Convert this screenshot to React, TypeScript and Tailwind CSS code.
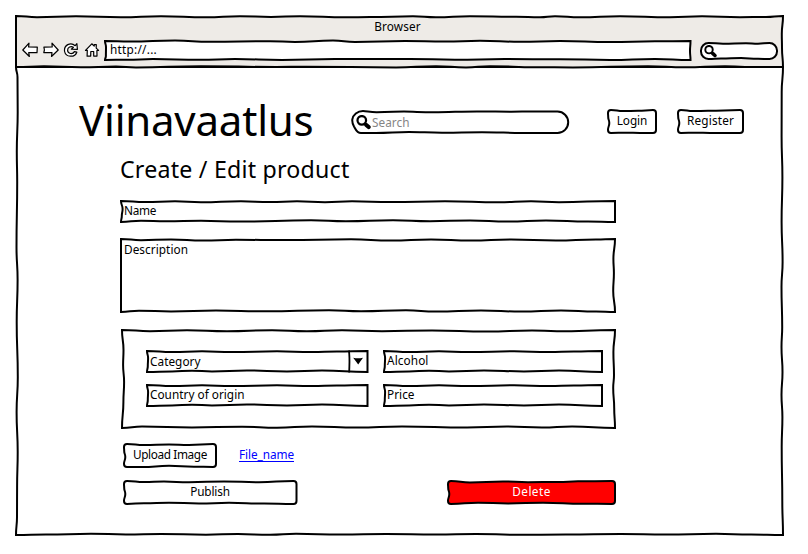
import { useLayoutEffect, useRef, useState, type ReactNode } from "react";

type Stop = [at: number, inset: number];
type Pt = [number, number];

interface Edges {
  top?: Stop[];
  right?: Stop[];
  bottom?: Stop[];
  left?: Stop[];
}

const f = (n: number) => n.toFixed(2);

// Smooth curve through every point of one edge.
function curve(p: Pt[]): string {
  let d = "";
  for (let i = 0; i < p.length - 1; i++) {
    const a = p[i];
    const b = p[i + 1];
    const horizontal = Math.abs(b[0] - a[0]) > Math.abs(b[1] - a[1]);
    const mx = (a[0] + b[0]) / 2;
    const my = (a[1] + b[1]) / 2;
    d += horizontal
      ? `C${f(mx)} ${f(a[1])} ${f(mx)} ${f(b[1])} ${f(b[0])} ${f(b[1])}`
      : `C${f(a[0])} ${f(my)} ${f(b[0])} ${f(my)} ${f(b[0])} ${f(b[1])}`;
  }
  return d;
}

// Hand-drawn rectangle outline; stops run left to right and top to bottom.
function outline(w: number, h: number, r: number, e: Edges): string {
  const top: Pt[] = [[r, 0], ...(e.top ?? []).map(([x, o]): Pt => [x, o]), [w - r, 0]];
  const right: Pt[] = [[w, r], ...(e.right ?? []).map(([y, o]): Pt => [w - o, y]), [w, h - r]];
  const bottom: Pt[] = [[r, h], ...(e.bottom ?? []).map(([x, o]): Pt => [x, h - o]), [w - r, h]];
  const left: Pt[] = [[0, r], ...(e.left ?? []).map(([y, o]): Pt => [o, y]), [0, h - r]];
  bottom.reverse();
  left.reverse();
  const arc = (x: number, y: number) => (r ? `A${r} ${r} 0 0 1 ${f(x)} ${f(y)}` : "");
  return `M${r} 0${curve(top)}${arc(w, r)}${curve(right)}${arc(w - r, h)}${curve(bottom)}${arc(0, h - r)}${curve(left)}${arc(r, 0)}Z`;
}

interface SketchProps {
  w: number;
  h: number;
  r?: number;
  edges?: Edges;
  path?: string;
  fill?: string;
  className: string;
  children?: ReactNode;
}

function Sketch({ w, h, r = 0, edges = {}, path, fill = "fill-white", className, children }: SketchProps) {
  return (
    <div className={`relative isolate shrink-0 ${className}`}>
      <svg className={`absolute inset-0 -z-10 overflow-visible stroke-black ${fill}`} width={w} height={h} strokeWidth={2}>
        <path d={path ?? outline(w, h, r, edges)} />
      </svg>
      {children}
    </div>
  );
}

// Text tracked so that its advance equals the given width.
function Label({ text, width, className = "" }: { text: string; width: number; className?: string }) {
  const ref = useRef<HTMLSpanElement>(null);
  const [spacing, setSpacing] = useState(0);
  useLayoutEffect(() => {
    if (ref.current) {
      const natural = ref.current.getBoundingClientRect().width - spacing * text.length;
      setSpacing((width - natural) / text.length);
    }
  }, [text, width]);
  return (
    <span ref={ref} className={`inline-block whitespace-pre ${className}`} style={{ letterSpacing: `${spacing}px` }}>
      {text}
    </span>
  );
}

function Magnifier({ className }: { className: string }) {
  return (
    <svg className={className} viewBox="0 0 14 14" fill="none" stroke="black">
      <circle cx="5.4" cy="5" r="4" strokeWidth="2.1" />
      <path d="M8.2 8 9.6 9.4" strokeWidth="2.4" />
      <path d="M9.6 9.3 11.8 11.3" strokeWidth="3.8" strokeLinecap="round" />
    </svg>
  );
}

function NavIcons() {
  return (
    <div className="flex h-4 w-[78px] shrink-0 items-center justify-between">
      <svg className="h-4 w-4" viewBox="0 0 16 16" fill="white" stroke="black" strokeWidth="1.2" strokeLinejoin="round">
        <path d="M.8 8 7 1.2 6.6 4.9 15.3 5.1 15 10.7 6.7 10.6 7.4 14.5Z" />
      </svg>
      <svg className="h-4 w-4" viewBox="0 0 16 16" fill="white" stroke="black" strokeWidth="1.2" strokeLinejoin="round">
        <path d="M15.2 8 9 1.2 9.2 4.9.9 5.1 1.4 8 .8 10.7 9 10.6 8.5 14.5Z" />
      </svg>
      <svg className="h-4 w-4" viewBox="0 0 16 16" fill="white" stroke="black" strokeWidth="1.2" strokeLinejoin="round">
        <path d="M12.2 3.7 13.9 1.7 14.4 7.3 8.4 7.2 10.4 5.3C8 3.6 4.5 5.2 4.6 8.3 4.7 12 9.7 12.7 11.4 9.6L13.8 10.2C11.9 15.8 2.8 15.5 1.6 9.5.6 3.1 7.7-.5 12.2 3.7Z" />
      </svg>
      <svg className="h-4 w-4" viewBox="0 0 16 16" fill="white" stroke="black" strokeWidth="1.2" strokeLinejoin="round">
        <path d="M3.3 8.3 1.5 8.4 7.8 1.8 10.2 4.1 10.3 2.7 12.3 2.7 12.2 6.1 14.6 8.4 12.9 8.5 13 14.1 9.7 14.1 9.7 9.5 6.8 9.5 6.7 14.1 3.1 14.2Z" />
      </svg>
    </div>
  );
}

const FIELD: Edges = {
  top: [[25, 1], [55, 0.3], [85, 1.1], [130, 0.3], [165, 1], [190, 0.6]],
  bottom: [[25, 0.6], [45, 1.2], [65, 0.6], [100, 1.5], [140, 0.6], [175, 1.5]],
  left: [[7, 1.1], [15, 0.8]],
};

const BUTTON: Edges = {
  top: [[15, 1.1], [30, 0.8]],
  bottom: [[18, 0.3], [32, 0]],
  left: [[7, 0.2], [13, 1.3]],
};

const SEARCH_OUTLINE =
  "M11 0C15 0 18 1.4 25 1.3C38 1.2 44 .5 52 .5C62 .5 70 1.4 82 1.3C98 1.2 110 .4 125 .4C142 .4 155 1 170 .6H205.5A10.7 10.7 0 0 1 205.5 22H180C160 22 145 21.2 130 21.2C112 21.2 105 22 90 21.8C75 21.6 68 21 57 21C42 21 36 22.3 20 22H9C4.5 22 3.8 18.5 2 15.5C.6 13 0 11.5.3 8.5C.9 4 5.5 0 11 0Z";

export default function App() {
  return (
    <div className="h-[554px] w-[808px] overflow-hidden bg-white pt-4 pl-4 font-['Noto_Sans',sans-serif] text-[11.8px] leading-4 text-black">
      <Sketch
        w={767}
        h={51}
        fill="fill-[#eeebe7]"
        className="z-10 h-[51px] w-[767px]"
        edges={{
          top: [[21, 1.2], [60, 0.3], [105, 1.2], [145, 0.2], [190, 1.2], [224, 0.2], [255, 1], [284, 0.2], [330, 1.2], [354, 1.1], [397, 0.2], [420, 1.2], [454, 0.2], [500, 0.8], [524, 1.2], [539, 0.2], [564, 1.3], [604, 0.2], [654, 1.2], [686, 0.3], [724, 1.2], [750, 1]],
          bottom: [[28, 0.7], [65, -0.2], [100, 0.4], [120, -0.4], [185, 0.8], [260, 0], [290, 0.3], [380, -0.4], [420, 0.8], [450, -0.4], [474, 0.8], [520, -0.2], [557, -0.5], [632, 0.8], [669, -0.2], [709, 0.8], [729, 0]],
          right: [[18, 1.2], [32, 1]],
        }}
      >
        <div className="flex h-[25px] justify-center pt-[2px] pr-1">
          <Label text="Browser" width={46.5} />
        </div>
        <div className="flex pl-[6px]">
          <div className="pt-px">
            <NavIcons />
          </div>
          <Sketch
            w={585.5}
            h={19}
            className="ml-[5px] h-[19px] w-[586px] pl-[5px]"
            edges={{
              top: [[25, 0.5], [70, -0.5], [105, 0.8], [165, 0.3], [190, 0.9], [228, -0.5], [250, 0.9], [300, 0], [340, 0.6], [375, -0.3], [415, 0.8], [455, 0], [505, 1], [550, 0.3]],
              bottom: [[22, 0.3], [48, 0.9], [95, 0.2], [130, 0.9], [177, 0.1], [230, 0.9], [305, 1], [350, 0.3], [400, 0.9], [455, 0.8], [505, 0], [550, 1]],
              left: [[6, 1], [15, 0.9]],
              right: [[10, 0.5]],
            }}
          >
            <Label text="http://..." width={47} />
          </Sketch>
          <Sketch
            w={76}
            h={16}
            r={7.5}
            className="mt-[2px] ml-[10px] h-4 w-[76px] pt-[2px] pl-[3px]"
            edges={{ top: [[22, 0.7], [45, 0.2], [57, 0.7]], bottom: [[20, 0.5], [40, 0.9], [57, 0.2]] }}
          >
            <Magnifier className="h-[13px] w-[13px]" />
          </Sketch>
        </div>
      </Sketch>

      <Sketch
        w={767}
        h={468}
        className="h-[468px] w-[767px]"
        edges={{
          left: [[10, 1.5], [45, 1.7], [85, 0.8], [115, 1.2], [180, 0.5], [213, 1.6], [255, 0.7], [310, 1.8], [345, 0.6], [385, 1.7], [420, 1.1], [450, 1]],
          right: [[25, 1.3], [70, 1.4], [110, 0.6], [155, 1.4], [195, 0.4], [220, 1.5], [260, 0.8], [280, 1.5], [305, 0.5], [328, 1.5], [350, 0.6], [380, 1.3], [435, 0.7]],
          bottom: [[30, 0.4], [75, 1.3], [110, 0.5], [145, 1.1], [190, 0.3], [222, 1], [254, 0.2], [280, 1.2], [325, 0.4], [370, 1.1], [420, 0.5], [460, 1], [500, 0.3], [550, 0.4], [605, 1.1], [650, 0.4], [700, 1.2], [735, 0.4]],
        }}
      >
        <header className="flex pt-[27px] pl-[63px]">
          <h1 className="w-[273px] shrink-0 text-[42px] leading-[52px]">
            <Label text="Viinavaatlus" width={234.5} />
          </h1>
          <Sketch
            w={217}
            h={22}
            path={SEARCH_OUTLINE}
            className="mt-[17px] flex h-[22px] w-[216px] gap-px pt-[3px] pl-1"
          >
            <Magnifier className="mt-px h-[15px] w-[15px] shrink-0" />
            <Label text="Search" width={37.5} className="text-[#858585]" />
          </Sketch>
          <Sketch w={48} h={23} r={3} edges={BUTTON} className="mt-4 ml-10 flex h-[23px] w-12 justify-center pt-[2px]">
            <Label text="Login" width={30.5} />
          </Sketch>
          <Sketch w={65} h={23} r={3} edges={BUTTON} className="mt-4 ml-[22px] flex h-[23px] w-[65px] justify-center pt-[2px]">
            <Label text="Register" width={47} />
          </Sketch>
        </header>

        <main className="pl-[105px]">
          <h2 className="mt-[7px] h-[48px] text-[23.2px] leading-[32px]">
            <Label text="Create / Edit product" width={229.5} className="-ml-px" />
          </h2>

          <Sketch
            w={494}
            h={21}
            className="h-[21px] w-[494px] pt-px pl-[3px]"
            edges={{
              top: [[24, 1], [54, 0.3], [80, 1.2], [120, 0.2], [149, 1.1], [176, 0.3], [204, 1.2], [231, 0.3], [270, 1.1], [324, 0.2], [378, 1.2], [410, 0.3], [438, 1.2]],
              bottom: [[20, 1.3], [45, 0.7], [80, 1.3], [119, 0.4], [190, 1.7], [225, 0.7], [272, 1.7], [309, 0.7], [349, 1.6], [387, 0.5], [425, 1.6], [467, 0.4]],
              left: [[8, 1.6], [15, 0.8]],
            }}
          >
            <Label text="Name" width={32} />
          </Sketch>

          <Sketch
            w={494}
            h={73}
            className="mt-[17px] h-[73px] w-[494px] pt-[2px] pl-[3px]"
            edges={{
              top: [[20, 1.2], [50, 0.5], [82, 1.6], [115, 0.8], [165, 1], [230, 0.3], [270, 1.5], [310, 0.4], [350, 1.6], [390, 0.5], [435, 1.4], [475, 0.4]],
              bottom: [[18, 1.3], [50, 0.5], [95, 1.4], [145, 0.7], [208, 1.7], [240, 0.7], [285, 1.7], [315, 0.5], [360, 1.6], [400, 0.4], [440, 1.5], [475, 0.4]],
              right: [[20, 1.6], [34, 1.1], [52, 1.8]],
            }}
          >
            <Label text="Description" width={64} />
          </Sketch>

          <Sketch
            w={493}
            h={98}
            className="mt-[18px] ml-px grid h-[98px] w-[493px] grid-cols-[221px_218px] content-start gap-x-4 gap-y-[13px] pt-[21px] pl-[25px]"
            edges={{
              top: [[28, 1.2], [65, 0.3], [105, 1.3], [150, 0.3], [185, 1.3], [220, 0.3], [260, 1.2], [310, 0.4], [365, 1.4], [410, 0.4], [435, 1.3]],
              bottom: [[20, 1.4], [70, 0.5], [120, 1.3], [155, 0.3], [190, 1.5], [235, 0.4], [280, 1.5], [345, 0.5], [385, 1.4], [420, 0.5], [450, 1.5]],
              left: [[20, 1.5], [35, 1.1], [52, 2.1], [72, 1.4]],
              right: [[22, 1.6], [45, 1], [58, 1.8], [78, 0.8]],
            }}
          >
            <Sketch w={220.5} h={21} edges={FIELD} className="flex h-[21px] w-[221px] justify-between pl-[3px]">
              <div className="pt-[2px]">
                <Label text="Category" width={50.5} />
              </div>
              <svg className="h-[21px] w-5 overflow-visible" viewBox="0 0 20 21">
                <path d="M.9-.5C2 7 1.3 14 1.2 21.5" fill="none" stroke="black" strokeWidth="1.8" />
                <path d="M5.2 6.7C8.5 7.5 11.5 7.4 15 6.7L10.2 13.5Z" />
              </svg>
            </Sketch>
            <Sketch w={218} h={21} edges={FIELD} className="h-[21px] w-[218px] pt-px pl-[3px]">
              <Label text="Alcohol" width={41.5} />
            </Sketch>
            <Sketch w={220.5} h={21} edges={FIELD} className="h-[21px] w-[221px] pt-px pl-[3px]">
              <Label text="Country of origin" width={94.5} />
            </Sketch>
            <Sketch w={218} h={21} edges={FIELD} className="h-[21px] w-[218px] pt-px pl-[3px]">
              <Label text="Price" width={27.5} />
            </Sketch>
          </Sketch>

          <div className="mt-4 flex pl-[3px]">
            <Sketch w={92} h={23} r={3} edges={{ ...BUTTON, bottom: [[18, 0], [45, 1.2], [70, 0.3]], top: [[20, 1.1], [45, 0.4], [65, 0.9]] }} className="flex h-[23px] w-[92px] justify-center pt-[2px]">
              <Label text="Upload Image" width={74} />
            </Sketch>
            <a className="mt-[2px] ml-[23px] h-4 border-b border-[#0000ff] text-[#0000ff]">
              <Label text="File_name" width={55} />
            </a>
          </div>

          <div className="mt-[14px] flex justify-between pr-[168px] pl-[3px]">
            <Sketch w={172.5} h={23} r={3} edges={{ top: [[20, 1.1], [40, 0.5], [65, 1.3], [100, 0.4], [135, 1.2]], bottom: [[20, 0.8], [45, 1.3], [75, 0.5], [105, 1.2], [140, 0.4]], left: BUTTON.left }} className="flex h-[23px] w-[172px] justify-center pt-[2px]">
              <Label text="Publish" width={39.5} />
            </Sketch>
            <Sketch w={167} h={23} r={3} fill="fill-[#ff0000]" edges={{ top: [[22, 1.4], [55, 0.5], [80, 1.2], [110, 1], [130, 0.3]], bottom: [[30, 1.3], [60, 0.5], [95, 1.3], [135, 0.3]], left: BUTTON.left }} className="flex h-[23px] w-[167px] justify-center pt-[2px] text-white">
              <Label text="Delete" width={38.5} />
            </Sketch>
          </div>
        </main>
      </Sketch>
    </div>
  );
}
